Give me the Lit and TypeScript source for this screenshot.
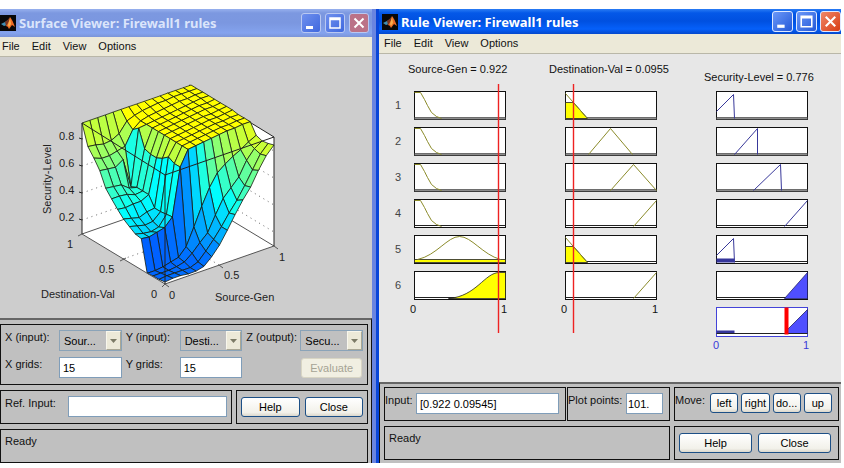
import { LitElement, html, svg, css } from "lit";
import { customElement, property } from "lit/decorators.js";

type Pt = [number, number];
const pts = (list: Pt[]) => list.map(([x, y]) => `${x},${y}`).join(" ");

/* Height of the control surface above the floor: one row per
   Destination-Val step, one column per Source-Gen step. */
const HEIGHTS: number[][] = [
  [2, 3, 3, 2, 2, 4, 11, 20, 32, 45, 57, 67, 81, 93, 101],
  [1, 2, 2, 2, 2, 5, 13, 22, 32, 43, 53, 65, 78, 91, 99],
  [1, 1, 1, 2, 4, 10, 18, 25, 40, 54, 62, 70, 84, 93, 98],
  [0, 0, 1, 3, 5, 13, 30, 48, 64, 76, 82, 87, 91, 96, 100],
  [31, 30, 32, 34, 42, 89, 104, 105, 106, 107, 108, 109, 109, 110, 110],
  [32, 30, 29, 31, 41, 89, 104, 105, 106, 107, 108, 109, 109, 110, 110],
  [36, 34, 32, 33, 40, 92, 104, 105, 106, 107, 108, 109, 109, 110, 110],
  [40, 38, 36, 39, 40, 87, 104, 105, 106, 107, 108, 109, 109, 110, 111],
  [46, 45, 46, 46, 50, 84, 104, 105, 106, 107, 108, 109, 109, 110, 111],
  [53, 53, 52, 49, 50, 84, 104, 105, 106, 107, 108, 109, 110, 110, 111],
  [60, 59, 58, 52, 50, 86, 104, 105, 106, 107, 108, 109, 110, 110, 111],
  [74, 73, 72, 77, 47, 103, 104, 105, 106, 107, 108, 109, 110, 111, 111],
  [83, 80, 80, 82, 84, 98, 104, 106, 107, 108, 109, 110, 110, 111, 111],
  [91, 90, 88, 89, 93, 103, 106, 108, 109, 110, 110, 111, 111, 111, 111],
  [111, 111, 111, 111, 111, 111, 111, 111, 111, 111, 111, 111, 111, 111, 111],
];

const project = (i: number, j: number): Pt => [
  Math.round((165 + (109 * i) / 14 - (83 * j) / 14) * 10) / 10,
  Math.round((284 - (38 * i) / 14 - (50 * j) / 14 - HEIGHTS[j][i]) * 10) / 10,
];

const shade = (h: number) => {
  const t = h >= 98 ? 0.625 : 0.22 + 0.00385 * h;
  const c = (v: number) => Math.round(255 * Math.max(0, Math.min(1, v)));
  return `rgb(${c(4 * t - 1.5)},${c(4 * t - 0.5)},${c(2.5 - 4 * t)})`;
};

const surfaceFaces = () => {
  const out = [];
  for (let j = 13; j >= 0; j--) {
    for (let i = 13; i >= 0; i--) {
      out.push(svg`<polygon class="face" fill=${shade(HEIGHTS[j][i])}
        points=${pts([project(i, j), project(i + 1, j), project(i + 1, j + 1), project(i, j + 1)])}/>`);
    }
  }
  return out;
};

@customElement("xp-titlebar")
class XpTitlebar extends LitElement {
  @property() caption = "";
  @property({ type: Boolean, reflect: true }) active = false;

  static styles = css`
    :host {
      display: flex;
      align-items: center;
      height: 28px;
      gap: 3px;
      padding-right: 3px;
      box-sizing: border-box;
      background: linear-gradient(#97b0ee 0, #7c98e0 4px, #7b97e0 14px, #84a3ee 24px, #7a94d8 28px);
      color: #dbe5fb;
      font: bold 14px/20px "Noto Sans", sans-serif;
    }
    :host([active]) {
      height: 25px;
      padding-left: 3px;
      padding-right: 0;
      background: linear-gradient(#2a7cf4 0, #0458e8 4px, #0050e0 12px, #0560fa 20px, #0448cc 25px);
      color: #fff;
    }
    .logo { width: 16px; height: 16px; flex: none; }
    .caption {
      flex: 1;
      min-width: 0;
      margin: 0;
      font-size: 13px;
      white-space: nowrap;
      overflow: hidden;
    }
    .buttons { display: flex; gap: 4px; }
    :host([active]) .buttons { gap: 3px; }
    button {
      width: 20px;
      height: 20px;
      padding: 0;
      border: 1px solid #b9c8f2;
      border-radius: 3px;
      background: linear-gradient(135deg, #6f90ee, #3f68de);
    }
    :host([active]) button {
      width: 21px;
      height: 21px;
      border-color: #dfe9ff;
      background: linear-gradient(135deg, #6b98f8, #2358d8);
    }
    button.close { background: #bb7288; }
    :host([active]) button.close { background: linear-gradient(135deg, #f08868, #d83c14); }
    button svg { display: block; width: 100%; height: 100%; }
  `;

  render() {
    return html`
      <svg class="logo" viewBox="0 0 16 16" aria-hidden="true">
        <rect width="16" height="16" fill="#080808" />
        <path d="M1 9 5 7 8 5 7 10 4 11Z" fill="#3f8fb4" />
        <path d="M5 7 Q8 5 10 2 L9 8 6 11Z" fill="#7a3520" />
        <path d="M10 2 Q12 4 15 12 L12 10 9 14 Q8 11 6 11 Q9 8 10 2Z" fill="#ee6b24" />
        <path d="M10 3 11 9 9 12 8 10Z" fill="#f8b04c" />
      </svg>
      <h2 class="caption">${this.caption}</h2>
      <div class="buttons">
        <button aria-label="Minimize"><svg viewBox="0 0 18 18"><rect x="4" y="12" width="7" height="3" fill="#fff"/></svg></button>
        <button aria-label="Maximize"><svg viewBox="0 0 18 18"><path d="M4 4H14V14H4Z M4 5.5H14" fill="none" stroke="#fff" stroke-width="1.5"/></svg></button>
        <button class="close" aria-label="Close window"><svg viewBox="0 0 18 18"><path d="M4.5 4.5 13.5 13.5M13.5 4.5 4.5 13.5" stroke="#fff" stroke-width="2"/></svg></button>
      </div>`;
  }
}

@customElement("xp-menubar")
class XpMenubar extends LitElement {
  static styles = css`
    :host {
      display: block;
      height: 20px;
      box-sizing: border-box;
      background: #ece9d8;
      border-bottom: 1px solid #b9b7a8;
      padding-left: 2px;
      font: 11px/19px "Liberation Sans", Arial, sans-serif;
    }
    nav { display: flex; gap: 12px; }
    button { all: unset; color: #111; }
  `;
  render() {
    return html`<nav>${["File", "Edit", "View", "Options"].map((m) => html`<button>${m}</button>`)}</nav>`;
  }
}

@customElement("surface-plot")
class SurfacePlot extends LitElement {
  static styles = css`
    :host { display: block; background: #cdcdcd; }
    svg { display: block; width: 100%; height: auto; }
    text { font: 11px "Liberation Sans", Arial, sans-serif; fill: #222; }
    .face { stroke: #141c10; stroke-width: 0.8; stroke-linejoin: round; }
    .wall { fill: #fff; }
    .edge { fill: none; stroke: #222; }
    .floor { fill: none; stroke: #555; }
    .dots { fill: none; stroke: #666; stroke-dasharray: 1 4; }
  `;
  render() {
    const ticks: [string, number][] = [["0.8", 139], ["0.6", 166], ["0.4", 193], ["0.2", 220]];
    return html`<svg viewBox="0 57 372 261" role="img" aria-label="Security-Level surface">
      <polygon class="wall" points="82,123 189,85 274,137 274,246 165,284 82,234" />
      ${ticks.map(([, y]) => svg`<path class="dots" d="M82 ${y}L191 ${y - 38}L274 ${y + 12}"/>`)}
      <path class="dots" d="M123 259L232 221M219 265L137 215" />
      <path class="floor" d="M82 234L191 196L274 246" />
      <path class="edge" d="M189 85L274 137" />
      ${surfaceFaces()}
      <path class="floor" d="M82 234L165 284L274 246M78 236L82 234M120 261L126 258M162 287L165 284L169 287M219 265L223 268M274 246L278 249" />
      <path class="edge" d="M82 234V123L165 175L274 137V246M165 175V284" />
      ${ticks.map(([t, y]) => svg`<path class="edge" d="M79 ${y - 1}L82 ${y}"/><text x="59" y=${y + 1}>${t}</text>`)}
      <text x="67" y="248">1</text>
      <text x="99" y="273">0.5</text>
      <text x="151" y="298">0</text>
      <text x="169" y="299">0</text>
      <text x="224" y="279">0.5</text>
      <text x="279" y="261">1</text>
      <text x="41" y="298">Destination-Val</text>
      <text x="215" y="301">Source-Gen</text>
      <text transform="translate(51 214) rotate(-90)">Security-Level</text>
    </svg>`;
  }
}

@customElement("rule-plot")
class RulePlot extends LitElement {
  static styles = css`
    :host { display: block; background: #e7e7e7; }
    svg { display: block; width: 100%; height: auto; }
    text { font: 11px "Liberation Sans", Arial, sans-serif; fill: #111; }
    .num { fill: #444; }
    .out { fill: #3a3ad8; }
    .box { fill: #fff; stroke: #111; }
    .total { fill: #fff; stroke: #4343d8; }
    .band { fill: #8c8c8c; stroke: #333; stroke-width: 0.6; }
    .base { stroke: #222; }
    .mf { fill: none; stroke: #8b8b2a; }
    .hit { fill: #ff0; stroke: #222; stroke-width: 0.8; }
    .omf { fill: none; stroke: #38389a; }
    .ofill { fill: #4f4fff; stroke: #22226a; stroke-width: 0.8; }
    .oband { fill: #35359a; }
    .cursor { stroke: #e22; stroke-width: 1.4; }
    .result { fill: #f00; }
  `;
  render() {
    const rows = [91, 127, 163, 199, 235, 271];
    const cols = [414, 565, 716];
    const at = (x: number, y: number, body: unknown) => svg`<g transform="translate(${x} ${y})">${body}</g>`;
    const falling = svg`<path class="mf" d="M0 1H6L10 8 13 14 17 21 22 25 27 27"/>`;
    const small = svg`<polygon class="hit" points="0,11 8,11 22,27 0,27"/><path class="mf" d="M0 2L22 27"/>`;
    const lowOut = svg`<path class="omf" d="M0 20L17 3 18 27"/>`;
    const source = [
      falling, falling, falling, falling,
      svg`<rect class="hit" x="0" y="24" width="91" height="3"/><path class="mf" d="M3 24C22 20 33 1 45 1S68 19 86 24"/>`,
      svg`<path class="hit" d="M34 27C62 25 70 1 85 1H91V27Z"/>`,
    ];
    const dest = [
      small,
      svg`<path class="mf" d="M23 27L45 1 67 27"/>`,
      svg`<path class="mf" d="M45 27L68 1 91 27"/>`,
      svg`<path class="mf" d="M68 27L91 1"/>`,
      small,
      svg`<path class="mf" d="M68 27L91 1"/>`,
    ];
    const level = [
      lowOut,
      svg`<path class="omf" d="M18 27L41 1V27"/>`,
      svg`<path class="omf" d="M37 27L64 1 65 27"/>`,
      svg`<path class="omf" d="M68 27L91 1"/>`,
      svg`<rect class="oband" y="23" width="18" height="4"/>${lowOut}`,
      svg`<polygon class="ofill" points="68,27 91,1 91,27"/>`,
    ];
    return html`<svg viewBox="379 54 462 328" role="img" aria-label="Fuzzy rules">
      <text x="408" y="73">Source-Gen = 0.922</text>
      <text x="549" y="73">Destination-Val = 0.0955</text>
      <text x="704" y="81">Security-Level = 0.776</text>
      ${rows.map((y, r) => svg`
        <text class="num" x="395" y=${y + 18}>${r + 1}</text>
        ${[source, dest, level].map((set, c) => at(cols[c] + 0.5, y + 0.5, svg`
          <rect class="box" width="91" height="28"/>
          ${r < 3 ? svg`<rect class="band" y="26" width="91" height="2"/>` : svg`<path class="base" d="M0 26H91"/>`}
          ${set[r]}`))}`)}
      ${at(716.5, 307.5, svg`
        <rect class="total" width="91" height="29"/>
        <polygon class="ofill" points="71,26 71,22 91,2 91,26"/>
        <rect class="oband" y="23" width="18" height="3"/>
        <path class="base" d="M0 26H91"/>
        <rect class="result" x="68" y="0" width="4" height="27"/>`)}
      <text x="410" y="313">0</text><text x="501" y="313">1</text>
      <text x="561" y="313">0</text><text x="652" y="313">1</text>
      <text class="out" x="713" y="349">0</text><text class="out" x="803" y="349">1</text>
      <path class="cursor" d="M498.5 84V333M573.5 84V333" />
    </svg>`;
  }
}

const controls = css`
  .panel { background: #c0c0c0; border-top: 2px solid #666; box-sizing: border-box; font: 11px/14px "Liberation Sans", Arial, sans-serif; color: #111; }
  .frame { border: 1px solid #111; box-sizing: border-box; min-width: 0; }
  .row { display: flex; align-items: flex-start; }
  .panel input, .panel button, .panel select { font: inherit; box-sizing: border-box; margin: 0; color: #000; }
  .panel input { height: 21px; min-width: 0; border: 1px solid #7f9db9; background: #fff; padding: 0 3px; }
  .panel button { height: 20px; padding: 0; border: 1px solid #1c4f86; border-radius: 3px; background: linear-gradient(#fff, #f2f1ea 80%, #dcd8cc); white-space: nowrap; }
  .status { padding: 4px 4px; height: 34px; }
`;

@customElement("surface-controls")
class SurfaceControls extends LitElement {
  static styles = [controls, css`
    :host { display: block; }
    .panel { height: 145px; padding: 4px 3px 0 0; border-right: 1px solid #111; display: flex; flex-direction: column; gap: 5px; }
    .fields { display: grid; grid-template-columns: repeat(3, 58px minmax(0, 1fr)); gap: 6px 0; padding: 5px 4px 5px 0; height: 61px; }
    .fields label { padding: 0 0 0 4px; white-space: nowrap; }
    .drop { position: relative; display: block; }
    .drop select { appearance: none; width: 100%; height: 21px; border: 1px solid #8aa3b8; border-radius: 0; background: #c0c0c0; padding: 0 4px; }
    .arrow { position: absolute; top: 1px; right: 1px; bottom: 1px; width: 15px; background: #ece9d8; border: 1px solid #f8f6ec; border-right-color: #aaa794; border-bottom-color: #aaa794; box-sizing: border-box; pointer-events: none; display: grid; place-items: center; }
    .arrow svg { width: 7px; height: 4px; }
    .panel .fields button { grid-column: 6; margin: 1px; border-color: #d8d5c4; background: #f1efe2; color: #a5a394; }
    .ref { flex: 1; height: 34px; padding: 5px 4px; }
    .ref label { width: 63px; }
    .ref input { flex: 1; }
    .actions { width: 132px; height: 34px; padding: 6px 4px; gap: 5px; }
    .actions button { flex: 1; }
    .split { gap: 4px; }
  `];
  drop(id: string, label: string, value: string) {
    return html`<label for=${id}>${label}</label>
      <span class="drop"><select id=${id}><option>${value}</option></select>
        <span class="arrow"><svg viewBox="0 0 7 4" aria-hidden="true"><path d="M0 0H7L3.5 4Z" fill="#7b7a66"/></svg></span></span>`;
  }
  render() {
    return html`<div class="panel">
      <div class="frame fields">
        ${this.drop("x", "X (input):", "Sour...")}
        ${this.drop("y", "Y (input):", "Desti...")}
        ${this.drop("z", "Z (output):", "Secu...")}
        <label for="xg">X grids:</label><input id="xg" value="15" />
        <label for="yg">Y grids:</label><input id="yg" value="15" />
        <button disabled>Evaluate</button>
      </div>
      <div class="row split">
        <div class="frame row ref"><label for="ref">Ref. Input:</label><input id="ref" /></div>
        <div class="frame row actions"><button>Help</button><button>Close</button></div>
      </div>
      <div class="frame status">Ready</div>
    </div>`;
  }
}

@customElement("rule-controls")
class RuleControls extends LitElement {
  static styles = [controls, css`
    :host { display: block; }
    .panel { height: 81px; padding: 3px 2px 0 4px; border-left: 1px solid #111; display: grid; grid-template-columns: minmax(0, 1fr) 165px; gap: 5px 4px; align-content: start; }
    .top { gap: 1px; }
    .cell { height: 34px; padding: 5px 6px 5px 0; }
    .cell.input { flex: 1; }
    .cell.input label { width: 31px; }
    .cell.input input { flex: 1; }
    .points { width: 103px; }
    .points label { flex: 1; }
    .points input { width: 37px; padding: 0 1px; }
    .move { gap: 3px; }
    .move span { width: 32px; }
    .move button { flex: 1; }
    .actions { height: 34px; padding: 6px 7px 0 4px; gap: 6px; }
    .actions button { flex: 1; }
  `];
  render() {
    return html`<div class="panel">
      <div class="row top">
        <div class="frame row cell input"><label for="in">Input:</label><input id="in" value="[0.922 0.09545]" /></div>
        <div class="frame row cell points"><label for="pp">Plot points:</label><input id="pp" value="101." /></div>
      </div>
      <div class="frame row cell move" role="group" aria-labelledby="mv"><span id="mv">Move:</span>
        <button>left</button><button>right</button><button>do...</button><button>up</button></div>
      <div class="frame status">Ready</div>
      <div class="frame row actions"><button>Help</button><button>Close</button></div>
    </div>`;
  }
}

@customElement("app-root")
class AppRoot extends LitElement {
  static styles = css`
    :host { display: block; background: #fff; padding: 9px 3px 0 0; }
    .desk { display: grid; grid-template-columns: minmax(0, 376fr) minmax(0, 465fr); align-items: start; }
    .surface { border-right: 4px solid #6a85e0; }
    .rules { border-left: 3px solid #0a46d8; }
    .rules xp-menubar { padding-left: 5px; }
  `;
  render() {
    return html`<main class="desk">
      <section class="surface">
        <xp-titlebar caption="Surface Viewer: Firewall1 rules"></xp-titlebar>
        <xp-menubar></xp-menubar>
        <surface-plot></surface-plot>
        <surface-controls></surface-controls>
      </section>
      <section class="rules">
        <xp-titlebar active caption="Rule Viewer: Firewall1 rules"></xp-titlebar>
        <xp-menubar></xp-menubar>
        <rule-plot></rule-plot>
        <rule-controls></rule-controls>
      </section>
    </main>`;
  }
}
